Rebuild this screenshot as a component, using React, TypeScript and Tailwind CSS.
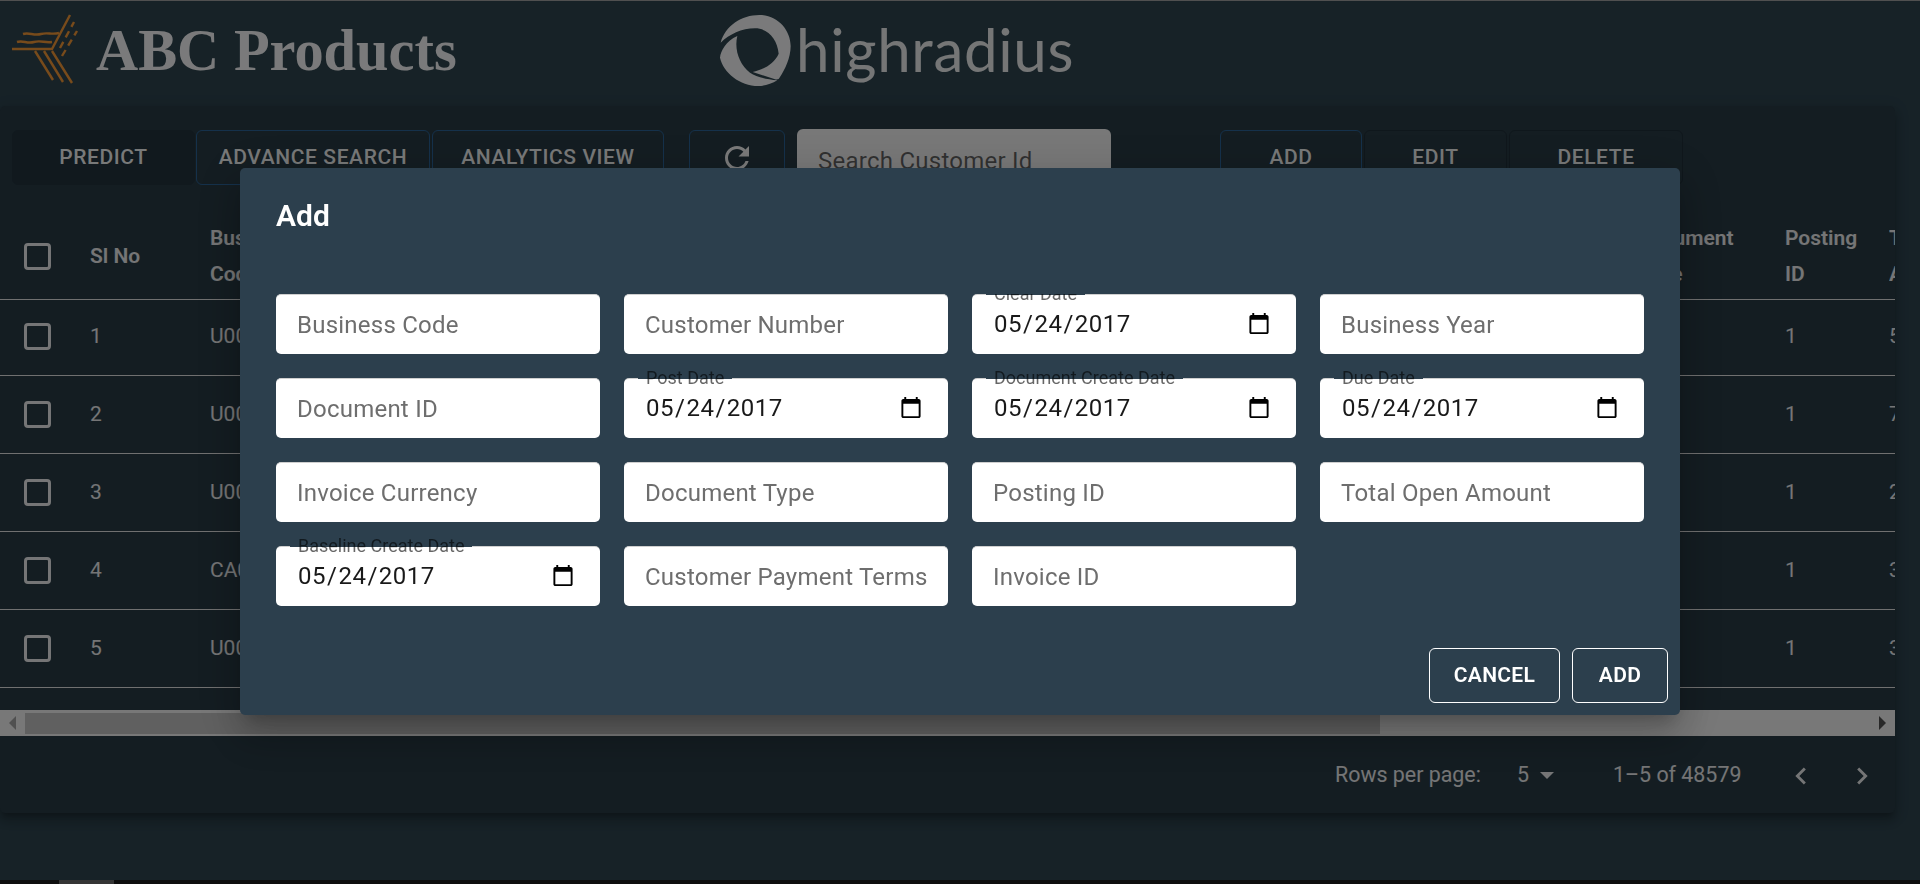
import React from "react";

const rows = [
  { n: 1, code: "U001", total: "5" },
  { n: 2, code: "U001", total: "7" },
  { n: 3, code: "U001", total: "2" },
  { n: 4, code: "CA02", total: "3" },
  { n: 5, code: "U001", total: "3" },
];

const fields: { label: string; date?: boolean }[] = [
  { label: "Business Code" },
  { label: "Customer Number" },
  { label: "Clear Date", date: true },
  { label: "Business Year" },
  { label: "Document ID" },
  { label: "Post Date", date: true },
  { label: "Document Create Date", date: true },
  { label: "Due Date", date: true },
  { label: "Invoice Currency" },
  { label: "Document Type" },
  { label: "Posting ID" },
  { label: "Total Open Amount" },
  { label: "Baseline Create Date", date: true },
  { label: "Customer Payment Terms" },
  { label: "Invoice ID" },
];

function Check() {
  return <span className="block h-[27px] w-[27px] rounded-[4px] border-[3px] border-white/90" />;
}

function Field({ label, date }: { label: string; date?: boolean }) {
  return (
    <div className="relative h-[60px]">
      {date ? (
        <>
          <input
            type="date"
            defaultValue="2017-05-24"
            className="h-full w-full rounded-[5px] border-t border-t-[#cfcfcf] bg-white pb-[2px] pl-[21px] pr-[23px] text-[24px] tracking-[0.5px] text-black/90 outline-none"
          />
          <span className="absolute left-[14px] top-0 flex h-px items-center whitespace-nowrap bg-[#2c3f4d] px-2 text-[18px] text-black/60">
            <span className="-translate-y-px">{label}</span>
          </span>
        </>
      ) : (
        <input
          type="text"
          placeholder={label}
          className="h-full w-full rounded-[5px] border-t border-t-[#cfcfcf] bg-white px-[21px] text-[24px] tracking-[0.23px] text-black outline-none placeholder:text-[#6e6e6e]"
        />
      )}
    </div>
  );
}

function TBtn({ w, border, bg, children }: { w: string; border: string; bg?: string; children: React.ReactNode }) {
  return (
    <button className={`flex h-[55px] shrink-0 items-center justify-center rounded-[6px] border text-[21px] font-medium uppercase tracking-[0.6px] text-white/95 ${w} ${border} ${bg ?? ""}`}>
      {children}
    </button>
  );
}

export default function App() {
  return (
    <div className="relative h-[884px] w-[1920px] overflow-hidden border-t border-t-[#a0a0a0] bg-[#2e444f] font-[Roboto,sans-serif]">
      {/* header */}
      <header className="flex h-[105px] items-start">
        <svg width="96" height="100" viewBox="0 0 96 100" fill="none" stroke="#f09636" strokeWidth="2.4" className="shrink-0">
          <path d="M12 48H52L70 14" />
          <path d="M17 41c6-2 10 2 17 0s10 1 18 0" />
          <path d="M23 33c6-2 11 2 18 0s10 1 18-1" />
          <path d="M35 50 53 79M44 50 63 81M52 50 72 82" />
          <path d="M60 47 74 21" strokeDasharray="7 5" />
          <path d="M62 55 77 30" strokeDasharray="7 5" />
        </svg>
        <span className="mt-[17px] w-[604px] shrink-0 font-['Liberation_Serif'] text-[58.4px] leading-[66px] font-bold whitespace-nowrap text-white/95">
          ABC Products
        </span>
        <svg width="100" height="100" viewBox="0 0 300 300" fill="#fff" fillOpacity="0.95" className="shrink-0">
          <path d="M62 125C75 75 125 42 178 42C235 42 272 90 272 135C272 170 255 205 240 228Q236 238 225 235L158 213C190 205 222 190 236 158C232 115 205 82 165 82C125 82 88 100 62 125Z" />
          <path d="M112 105C78 120 62 150 60 170C70 215 120 255 175 255C195 255 215 248 232 238C200 235 170 228 150 215C118 190 102 145 112 105Z" />
        </svg>
        <span className="-ml-[4px] mt-[6px] font-[Lato,sans-serif] text-[60px] leading-[84px] font-normal tracking-[0.7px] text-white/90">
          highradius
        </span>
      </header>

      {/* card */}
      <main className="h-[707px] w-[1895px] overflow-hidden rounded-[5px] bg-[#283a44] shadow-[0_5px_5px_-3px_rgba(0,0,0,.2),0_8px_10px_1px_rgba(0,0,0,.14),0_3px_14px_2px_rgba(0,0,0,.12)]">
        <div className="flex pl-[12px] pt-[24px]">
          <TBtn w="w-[183px]" border="border-[#22323d]" bg="bg-[#22323d]">Predict</TBtn>
          <div className="w-px shrink-0" />
          <TBtn w="w-[234px]" border="border-[#2a6296]">Advance Search</TBtn>
          <div className="w-[2px] shrink-0" />
          <TBtn w="w-[232px]" border="border-[#2a6296]">Analytics View</TBtn>
          <div className="w-[25px] shrink-0" />
          <TBtn w="w-[96px]" border="border-[#2a6296]">
            <svg width="36" height="36" viewBox="0 0 24 24" fill="currentColor">
              <path d="M17.65 6.35C16.2 4.9 14.21 4 12 4c-4.42 0-7.99 3.58-7.99 8s3.57 8 7.99 8c3.73 0 6.84-2.55 7.73-6h-2.08c-.82 2.33-3.04 4-5.65 4-3.31 0-6-2.69-6-6s2.69-6 6-6c1.66 0 3.14.69 4.22 1.78L13 11h7V4l-2.35 2.35z" />
            </svg>
          </TBtn>
          <div className="w-[12px] shrink-0" />
          <input
            placeholder="Search Customer Id"
            className="-mt-px h-[56px] w-[314px] shrink-0 rounded-[6px] bg-[#f0f0f0] px-[21px] pt-[8px] text-[24px] tracking-[0.25px] placeholder:text-black/60"
          />
          <div className="w-[109px] shrink-0" />
          <TBtn w="w-[142px]" border="border-[#2a6296]">Add</TBtn>
          <div className="w-[2px] shrink-0" />
          <TBtn w="w-[143px]" border="border-[#1f2e38]">Edit</TBtn>
          <div className="w-[2px] shrink-0" />
          <TBtn w="w-[174px]" border="border-[#1f2e38]">Delete</TBtn>
        </div>

        {/* table */}
        <div className="mt-[28px] h-[497px] text-white/90">
          <div className="flex h-[87px] items-center border-b border-b-[#e0e0e0] text-[21px] leading-[36px] font-semibold">
            <div className="w-[90px] shrink-0 pl-[24px]"><Check /></div>
            <div className="w-[120px] shrink-0">Sl No</div>
            <div className="w-[1427px] shrink-0">Business<br />Code</div>
            <div className="w-[148px] shrink-0">Document<br />Type</div>
            <div className="w-[104px] shrink-0">Posting<br />ID</div>
            <div className="w-[6px] overflow-hidden">Total<br />Amount</div>
          </div>
          {rows.map((r) => (
            <div
              key={r.n}
              className={`flex items-center border-b border-b-[#e0e0e0] text-[21px] ${r.n === 1 ? "h-[76px] pb-[2px]" : "h-[78px]"}`}
            >
              <div className="w-[90px] shrink-0 pl-[24px]"><Check /></div>
              <div className="w-[120px] shrink-0">{r.n}</div>
              <div className="w-[1427px] shrink-0">{r.code}</div>
              <div className="w-[148px] shrink-0">RV</div>
              <div className="w-[104px] shrink-0">1</div>
              <div className="w-[6px] overflow-hidden">{r.total}</div>
            </div>
          ))}
        </div>

        {/* scrollbar */}
        <div className="flex h-[26px] items-center bg-[#f1f1f1]">
          <div className="flex w-[25px] shrink-0 justify-center">
            <span className="h-0 w-0 border-y-[7px] border-r-[7px] border-y-transparent border-r-[#a0a0a0]" />
          </div>
          <div className="h-[21px] w-[1355px] shrink-0 bg-[#c1c1c1]" />
          <div className="flex-1" />
          <div className="flex w-[25px] shrink-0 justify-center">
            <span className="h-0 w-0 border-y-[7px] border-l-[7px] border-y-transparent border-l-[#505050]" />
          </div>
        </div>

        {/* pagination */}
        <div className="flex h-[77px] items-center pt-[2px] text-[21.4px] text-white/90">
          <span className="ml-[1335px] w-[182px] shrink-0">Rows per page:</span>
          <span className="w-[23px] shrink-0">5</span>
          <span className="h-0 w-0 shrink-0 border-x-[7px] border-t-[7px] border-x-transparent border-t-white/90" />
          <span className="ml-[59px] w-[128px] shrink-0 whitespace-nowrap">1–5 of 48579</span>
          <svg width="34" height="34" viewBox="0 0 24 24" fill="currentColor" className="ml-[43px] shrink-0">
            <path d="M15.41 7.41 14 6l-6 6 6 6 1.41-1.41L10.83 12z" />
          </svg>
          <svg width="34" height="34" viewBox="0 0 24 24" fill="currentColor" className="ml-[27px] shrink-0">
            <path d="M10 6 8.59 7.41 13.17 12l-4.58 4.59L10 18l6-6z" />
          </svg>
        </div>
      </main>

      {/* bottom system scrollbar */}
      <div className="absolute inset-x-0 bottom-0 h-[4px] bg-[#1c1c1c]">
        <div className="ml-[59px] h-full w-[55px] bg-[#6b6b6b]" />
      </div>

      {/* dialog */}
      <div className="fixed inset-0 flex items-start justify-center bg-black/50 pt-[168px]">
        <div className="flex h-[547px] w-[1440px] flex-col rounded-[5px] bg-[#2c3f4d] shadow-[0_11px_15px_-7px_rgba(0,0,0,.2),0_24px_38px_3px_rgba(0,0,0,.14),0_9px_46px_8px_rgba(0,0,0,.12)]">
          <h2 className="h-[126px] shrink-0 px-9 pt-[30px] text-[30px] leading-[36px] font-semibold text-white">Add</h2>
          <div className="grid grid-cols-4 gap-6 overflow-hidden px-9">
            {fields.map((f) => (
              <Field key={f.label} label={f.label} date={f.date} />
            ))}
          </div>
          <div className="mt-auto flex justify-end gap-3 p-3">
            <button className="h-[55px] w-[131px] rounded-[6px] border border-white text-[21px] font-semibold tracking-[0.3px] text-white">CANCEL</button>
            <button className="h-[55px] w-[96px] rounded-[6px] border border-white text-[21px] font-semibold tracking-[0.3px] text-white">ADD</button>
          </div>
        </div>
      </div>
    </div>
  );
}
